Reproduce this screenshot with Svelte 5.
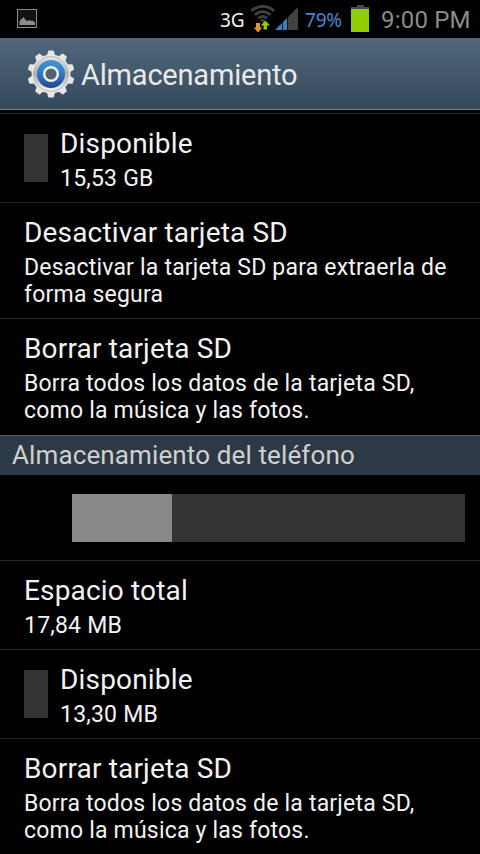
<script>
  const sdRows = [
    { title: 'Disponible', lines: ['15,53 GB'], swatch: true },
    { title: 'Desactivar tarjeta SD', lines: ['Desactivar la tarjeta SD para extraerla de', 'forma segura'] },
    { title: 'Borrar tarjeta SD', lines: ['Borra todos los datos de la tarjeta SD,', 'como la música y las fotos.'], last: true }
  ];
  const phoneRows = [
    { title: 'Espacio total', lines: ['17,84 MB'] },
    { title: 'Disponible', lines: ['13,30 MB'], swatch: true },
    { title: 'Borrar tarjeta SD', lines: ['Borra todos los datos de la tarjeta SD,', 'como la música y las fotos.'], last: true }
  ];
  const teeth = Array.from({ length: 10 }, (_, i) => i * 36);
</script>

{#snippet row(item)}
  <section class="row" class:last={item.last}>
    {#if item.swatch}<div class="swatch"></div>{/if}
    <div class="copy">
      <h2>{item.title}</h2>
      {#each item.lines as line}<p>{line}</p>{/each}
    </div>
  </section>
{/snippet}

<main>
  <div class="status">
    <svg class="picture" width="20" height="19" viewBox="0 0 20 19">
      <rect x=".5" y=".5" width="19" height="18" fill="#111" stroke="#8b8b8b" />
      <path d="M2.500 16V12l1.500-1.500L6.500 8 9 11.500l1.500.5 1.500-1 2 1 1.500-.5 2.500 2V16z" fill="#8b8b8b" />
    </svg>
    <span class="net">3G</span>
    <svg class="wifi" width="26" height="28" viewBox="0 0 26 28">
      <g fill="none" stroke="#414141" stroke-width="2.800">
        <path d="M1.200 5.800Q12.700-3 24.200 5.800" />
        <path d="M4.800 9.800Q12.700 3.500 20.600 9.800" />
        <path d="M8.300 13.300Q12.700 9.500 17.100 13.300" />
      </g>
      <path d="M10 15Q12.700 12.800 15.400 15L12.700 18z" fill="#414141" />
      <path d="M6 18h4V22.500h2.300L8 27.500 3.700 22.500H6z" fill="#e3942c" />
      <path d="M13.500 24.500h3.500V20.500h3L15.300 15.500 10.800 20.500h2.700z" fill="#8cce00" />
    </svg>
    <svg class="signal" width="24" height="23" viewBox="0 0 24 23">
      <path d="M0 23L12 11v12z" fill="#397fc0" />
      <path d="M12 11L23 0v23H12z" fill="#414141" />
      <path d="M7.500 14v9M12.500 9v14" stroke="#000" stroke-width=".8" />
    </svg>
    <span class="percent">79%</span>
    <svg class="battery" width="18" height="27" viewBox="0 0 18 27">
      <path d="M6 0h7v2h5v2H0V2h6z" fill="#494949" />
      <rect y="4" width="18" height="23" fill="#8fcf00" />
    </svg>
    <span class="clock">9:00 PM</span>
  </div>

  <header>
    <svg class="gear" width="48" height="50" viewBox="-24 -25 48 50">
      <defs>
        <linearGradient id="blue" x1="0" y1="0" x2="0" y2="1">
          <stop offset="0" stop-color="#4595d8" /><stop offset=".5" stop-color="#2f78c4" /><stop offset="1" stop-color="#1c4a92" />
        </linearGradient>
        <linearGradient id="ring" x1="0" y1="0" x2="0" y2="1">
          <stop offset="0" stop-color="#e8e8e8" /><stop offset=".5" stop-color="#adadad" /><stop offset="1" stop-color="#f5f5f5" />
        </linearGradient>
      </defs>
      <g fill="#e6e6e6">
        {#each teeth as angle}
          <path d="M-4.500-17L-3-22.500Q-2.800-23.500-2-23.500H2Q2.800-23.500 3-22.500L4.500-17z" transform="rotate({angle})" />
        {/each}
        <circle r="19.500" />
      </g>
      <circle r="17.300" fill="url(#ring)" stroke="#b5b5b5" stroke-width="1" />
      <circle r="14" fill="url(#blue)" />
      <circle r="6.800" fill="#536374" stroke="#eee" stroke-width="2.500" />
    </svg>
    <h1>Almacenamiento</h1>
  </header>

  <div class="top-gap"></div>
  {#each sdRows as item}{@render row(item)}{/each}
  <div class="category">Almacenamiento del teléfono</div>
  <section class="usage"><div class="track"><div class="used"></div></div></section>
  {#each phoneRows as item}{@render row(item)}{/each}
</main>

<style>
  main {
    box-sizing: border-box;
    width: 480px;
    height: 854px;
    overflow: hidden;
    background: #000;
    color: #f3f3f3;
    font-family: Roboto, sans-serif;
  }
  h1, h2, p { margin: 0; font-weight: 400; white-space: nowrap; }
  svg { display: block; flex: none; }
  .status { display: flex; align-items: flex-start; height: 38px; white-space: nowrap; }
  .picture { margin: 9px 0 0 17px; }
  .net { width: 30px; margin: 7px 0 0 183px; font: 19px/26px "Noto Sans", sans-serif; }
  .wifi { margin-top: 5px; }
  .signal { margin: 7px 0 0 -1px; }
  .percent { width: 45px; margin: 7px 0 0 6px; font: 19px/26px "Noto Sans", sans-serif; letter-spacing: -.2px; color: #4489cf; }
  .battery { margin: 5px 0 0 1px; }
  .clock { margin: 5px 0 0 12px; font-size: 24px; line-height: 30px; letter-spacing: .2px; color: #8b8b8b; }
  header {
    display: flex;
    align-items: center;
    box-sizing: border-box;
    height: 72px;
    padding-left: 27px;
    border-bottom: 1px solid #6f8796;
    background: linear-gradient(#50677c, #35495b);
  }
  h1 { margin: 2px 0 0 6px; font-size: 29px; line-height: 36px; letter-spacing: -.2px; color: #e9e9e9; }
  .top-gap { height: 3px; border-bottom: 1px solid #292929; }
  .row { display: flex; padding: 12px 0 10px 24px; border-bottom: 1px solid #292929; }
  .row.last { padding-bottom: 11px; border-bottom: 0; }
  .swatch { width: 24px; height: 48px; margin: 8px 12px 0 0; background: #333; }
  h2 { height: 39px; font-size: 28px; line-height: 36px; letter-spacing: .17px; }
  p { font-size: 23px; line-height: 27px; letter-spacing: .2px; }
  .category {
    box-sizing: border-box;
    height: 40px;
    padding-left: 12px;
    border-top: 1px solid #4c5e6c;
    background: #2d3a46;
    color: #d0d0d0;
    font-size: 26px;
    line-height: 39px;
    letter-spacing: .12px;
  }
  .usage { height: 66px; padding: 19px 15px 0 72px; border-bottom: 1px solid #292929; }
  .track { height: 48px; background: #333; }
  .used { width: 100px; height: 48px; background: #888; }
</style>
